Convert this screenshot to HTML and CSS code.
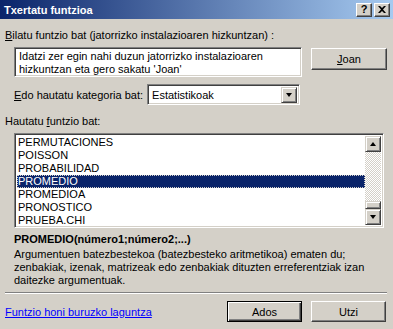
FILE: index.html
```
<!DOCTYPE html>
<html lang="eu">
<head>
  <meta charset="UTF-8">
  <title>Txertatu funtzioa</title>
  <link rel="stylesheet" href="styles.css">
</head>
<body>
  <div class="dialog">
    <div class="titlebar">
      <span class="title">Txertatu funtzioa</span>
      <div class="caption-btns">
        <span class="cap-btn">?</span>
        <span class="cap-btn">
          <svg width="8" height="7" viewBox="0 0 8 7"><path d="M0 0h2l2 2 2-2h2L5 3.5 8 7H6L4 5 2 7H0l3-3.5z" fill="#000"/></svg>
        </span>
      </div>
    </div>

    <div class="content">
      <div class="label"><u>B</u>ilatu funtzio bat (jatorrizko instalazioaren hizkuntzan) :</div>

      <div class="search-row">
        <div class="sunken search-box">Idatzi zer egin nahi duzun jatorrizko instalazioaren<br>hizkuntzan eta gero sakatu 'Joan'</div>
        <button class="btn"><u>J</u>oan</button>
      </div>

      <div class="cat-row">
        <span><u>E</u>do hautatu kategoria bat:</span>
        <div class="sunken combo">
          <span class="combo-text">Estatistikoak</span>
          <span class="arrow-btn"><i class="tri-down"></i></span>
        </div>
      </div>

      <div class="label list-label">Hautatu <u>f</u>untzio bat:</div>

      <div class="sunken listbox">
        <ul class="items">
          <li>PERMUTACIONES</li>
          <li>POISSON</li>
          <li>PROBABILIDAD</li>
          <li class="selected">PROMEDIO</li>
          <li>PROMEDIOA</li>
          <li>PRONOSTICO</li>
          <li>PRUEBA.CHI</li>
        </ul>
        <div class="scrollbar">
          <span class="arrow-btn"><i class="tri-up"></i></span>
          <div class="track">
            <span class="thumb"></span>
          </div>
          <span class="arrow-btn"><i class="tri-down"></i></span>
        </div>
      </div>

      <div class="signature">PROMEDIO(número1;número2;...)</div>
      <div class="desc">Argumentuen batezbestekoa (batezbesteko aritmetikoa) ematen du;<br>zenbakiak, izenak, matrizeak edo zenbakiak dituzten erreferentziak izan<br>daitezke argumentuak.</div>

      <div class="separator"></div>

      <div class="footer">
        <a class="help" href="#">Funtzio honi buruzko laguntza</a>
        <div class="actions">
          <button class="btn default">Ados</button>
          <button class="btn">Utzi</button>
        </div>
      </div>
    </div>
  </div>
</body>
</html>
```

FILE: styles.css
```
body {
  margin: 0;
  background-color: #d4d0c8;
  font-family: "Liberation Sans", Arial, sans-serif;
  font-size: 11px;
  color: #000000;
}

.dialog {
  width: 393px;
  height: 329px;
  background-color: #d4d0c8;
}

/* barra de titulo */
.titlebar {
  height: 19px;
  display: flex;
  align-items: center;
  justify-content: space-between;
  padding: 0 3px 0 4px;
  background: linear-gradient(to right, #0a246a, #a6caf0);
}

.title {
  color: #ffffff;
  font-weight: bold;
  font-size: 11px;
}

.caption-btns {
  display: flex;
  gap: 2px;
}

.cap-btn {
  width: 16px;
  height: 14px;
  box-sizing: border-box;
  display: flex;
  align-items: center;
  justify-content: center;
  background-color: #d4d0c8;
  border: 1px solid;
  border-color: #ffffff #404040 #404040 #ffffff;
  box-shadow: inset -1px -1px #808080;
  font-weight: bold;
  font-size: 11px;
  line-height: 1;
}

.content {
  padding: 0 6px 0 5px;
}

.label {
  margin-top: 10px;
  line-height: 13px;
}

/* bordes 3D */
.sunken {
  box-sizing: border-box;
  border: 1px solid;
  border-color: #808080 #ffffff #ffffff #808080;
  box-shadow: inset 1px 1px #404040, inset -1px -1px #d4d0c8;
  background-color: #ffffff;
}

.btn {
  box-sizing: border-box;
  background-color: #d4d0c8;
  border: 1px solid;
  border-color: #ffffff #404040 #404040 #ffffff;
  box-shadow: inset -1px -1px #808080;
  font-family: inherit;
  font-size: 11px;
  color: #000000;
  padding: 0;
  width: 76px;
  height: 22px;
}

.btn.default {
  border: 1px solid #000000;
  box-shadow: inset 1px 1px #ffffff, inset -1px -1px #404040, inset -2px -2px #808080;
}

.search-row {
  display: flex;
  align-items: flex-start;
  margin-top: 5px;
  padding-left: 9px;
}

.search-box {
  width: 288px;
  height: 30px;
  padding: 2px 4px;
  line-height: 13px;
}

.search-row .btn {
  margin-left: 9px;
  margin-top: 1px;
}

.cat-row {
  display: flex;
  align-items: center;
  margin-top: 7px;
  padding-left: 9px;
}

.combo {
  margin-left: 4px;
  width: 153px;
  height: 21px;
  display: flex;
  align-items: center;
  padding: 2px;
}

.combo-text {
  flex: 1;
  padding-left: 2px;
}

.arrow-btn {
  width: 16px;
  height: 16px;
  box-sizing: border-box;
  display: flex;
  align-items: center;
  justify-content: center;
  background-color: #d4d0c8;
  border: 1px solid;
  border-color: #d4d0c8 #404040 #404040 #d4d0c8;
  box-shadow: inset 1px 1px #ffffff, inset -1px -1px #808080;
}

.tri-down {
  width: 0;
  height: 0;
  border-left: 3px solid transparent;
  border-right: 3px solid transparent;
  border-top: 4px solid #000000;
}

.tri-up {
  width: 0;
  height: 0;
  border-left: 3px solid transparent;
  border-right: 3px solid transparent;
  border-bottom: 4px solid #000000;
}

.list-label {
  margin-top: 10px;
}

.listbox {
  margin: 5px 0 0 9px;
  width: 370px;
  height: 95px;
  display: flex;
  padding: 2px;
}

.items {
  list-style: none;
  margin: 0;
  padding: 0;
  flex: 1;
}

.items li {
  height: 13px;
  line-height: 13px;
  padding-left: 1px;
}

.items li.selected {
  background-color: #0a246a;
  color: #ffffff;
  outline: 1px dotted #d4d0c8;
  outline-offset: -1px;
}

.scrollbar {
  width: 16px;
  display: flex;
  flex-direction: column;
}

.track {
  flex: 1;
  position: relative;
  background: repeating-conic-gradient(#ffffff 0 25%, #d4d0c8 0 50%) 0 0 / 2px 2px;
}

.thumb {
  position: absolute;
  left: 0;
  bottom: 0;
  width: 16px;
  height: 8px;
  box-sizing: border-box;
  background-color: #d4d0c8;
  border: 1px solid;
  border-color: #d4d0c8 #404040 #404040 #d4d0c8;
  box-shadow: inset 1px 1px #ffffff, inset -1px -1px #808080;
}

.signature {
  margin: 5px 0 0 9px;
  font-weight: bold;
  line-height: 13px;
}

.desc {
  margin: 2px 0 0 9px;
  line-height: 13px;
}

.separator {
  margin-top: 5px;
  width: 382px;
  border-top: 1px solid #808080;
  border-bottom: 1px solid #ffffff;
}

.footer {
  display: flex;
  align-items: center;
  justify-content: space-between;
  margin-top: 7px;
}

.help {
  color: #0000ff;
  text-decoration: underline;
}

.actions {
  display: flex;
  gap: 9px;
  margin-right: 1px;
}

.actions .btn {
  width: 75px;
  height: 21px;
}
```
